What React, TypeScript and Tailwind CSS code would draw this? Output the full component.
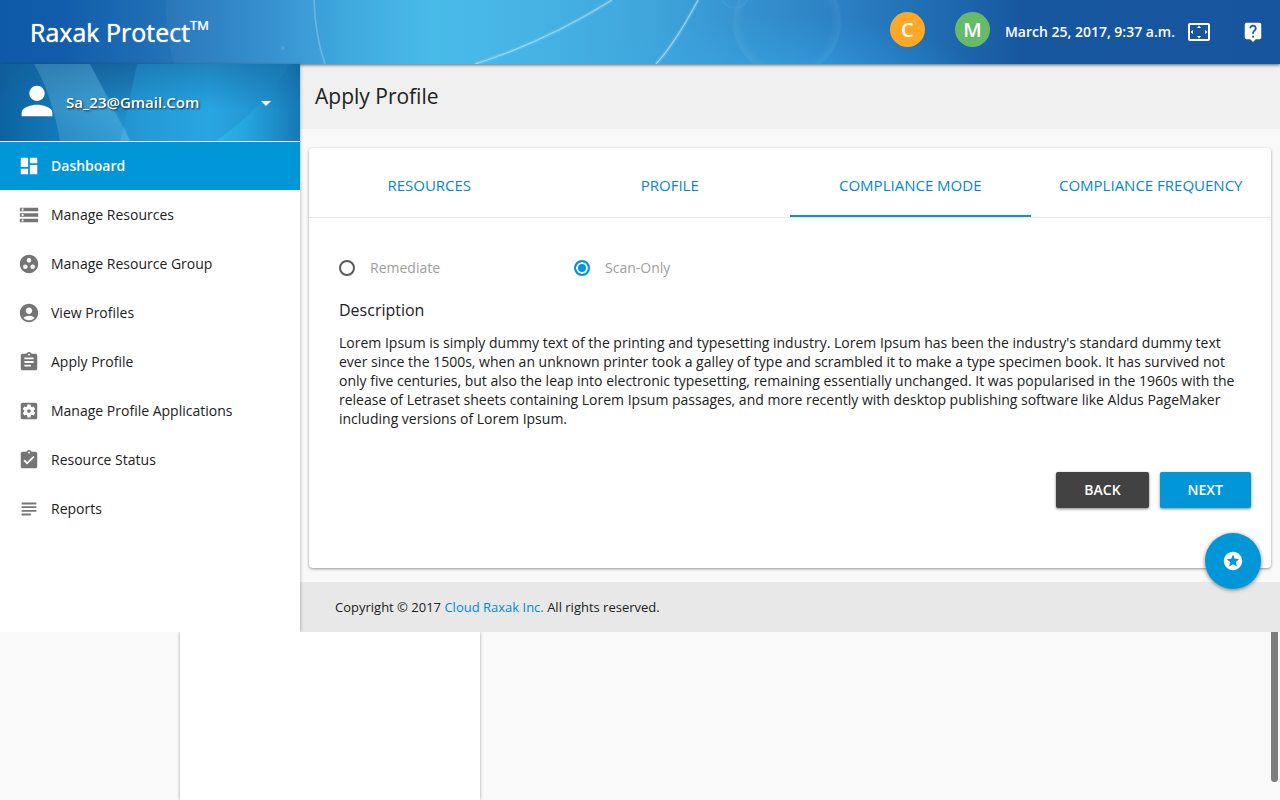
import { useState } from "react";
import type { IconType } from "react-icons";
import {
  MdAccountCircle,
  MdArrowDropDown,
  MdAssignment,
  MdAssignmentTurnedIn,
  MdDashboard,
  MdGroupWork,
  MdLiveHelp,
  MdPerson,
  MdSettingsApplications,
  MdSettingsOverscan,
  MdStars,
  MdStorage,
  MdSubject,
} from "react-icons/md";

const navItems: { label: string; icon: IconType }[] = [
  { label: "Dashboard", icon: MdDashboard },
  { label: "Manage Resources", icon: MdStorage },
  { label: "Manage Resource Group", icon: MdGroupWork },
  { label: "View Profiles", icon: MdAccountCircle },
  { label: "Apply Profile", icon: MdAssignment },
  { label: "Manage Profile Applications", icon: MdSettingsApplications },
  { label: "Resource Status", icon: MdAssignmentTurnedIn },
  { label: "Reports", icon: MdSubject },
];

const tabs = ["Resources", "Profile", "Compliance Mode", "Compliance Frequency"];
const modes = ["Remediate", "Scan-Only"];

function HeaderArt() {
  return (
    <svg className="absolute inset-0 h-full w-full" viewBox="0 0 1280 64" preserveAspectRatio="none" aria-hidden="true">
      <defs>
        <linearGradient id="sky" x1="0" x2="1" y1="0" y2="0">
          <stop offset="0" stopColor="#0f5aa8" />
          <stop offset="0.05" stopColor="#115dab" />
          <stop offset="0.13" stopColor="#2272b6" />
          <stop offset="0.2" stopColor="#2f8bcb" />
          <stop offset="0.27" stopColor="#3fa9de" />
          <stop offset="0.34" stopColor="#49bbe9" />
          <stop offset="0.42" stopColor="#45b3e4" />
          <stop offset="0.51" stopColor="#3fa5db" />
          <stop offset="0.58" stopColor="#3692cf" />
          <stop offset="0.66" stopColor="#2b7fc3" />
          <stop offset="0.72" stopColor="#216fb5" />
          <stop offset="0.8" stopColor="#1757a0" />
          <stop offset="1" stopColor="#17559f" />
        </linearGradient>
        <radialGradient id="glow">
          <stop offset="0" stopColor="#38b0ee" stopOpacity="0.55" />
          <stop offset="1" stopColor="#38b0ee" stopOpacity="0" />
        </radialGradient>
        <radialGradient id="bubble">
          <stop offset="0.8" stopColor="#7cc0e8" stopOpacity="0" />
          <stop offset="0.96" stopColor="#7cc0e8" stopOpacity="0.13" />
          <stop offset="1" stopColor="#7cc0e8" stopOpacity="0" />
        </radialGradient>
      </defs>
      <rect width="1280" height="64" fill="url(#sky)" />
      <path d="M166 0H320L325 64H174Q167 40 166 0Z" fill="#5fa6dc" fillOpacity="0.12" />
      <ellipse cx="780" cy="90" rx="210" ry="75" fill="url(#glow)" />
      <circle cx="787" cy="22" r="55" fill="url(#bubble)" />
      <circle cx="735" cy="-6" r="15" fill="url(#bubble)" />
      <g fill="none" stroke="#9ddcf6" strokeOpacity="0.2" strokeWidth="4">
        <path d="M475 64Q545 42 612 0" />
        <path d="M656 64Q676 42 698 0" />
      </g>
      <g fill="none" stroke="#b4e6fa" strokeOpacity="0.65">
        <path d="M475 64Q545 42 612 0" strokeWidth="1.3" />
        <path d="M656 64Q676 42 698 0" strokeWidth="1.3" />
        <path d="M314 0Q315 35 325 64" strokeOpacity="0.35" strokeWidth="1.6" />
      </g>
      <circle cx="283" cy="48" r="2" fill="#8fc9ee" fillOpacity="0.25" />
    </svg>
  );
}

function AccountArt() {
  return (
    <svg className="absolute inset-0 h-full w-full" viewBox="0 0 300 77" preserveAspectRatio="none" aria-hidden="true">
      <defs>
        <linearGradient id="pool" x1="0" x2="1" y1="0" y2="0">
          <stop offset="0" stopColor="#0d62a0" />
          <stop offset="0.2" stopColor="#147ab8" />
          <stop offset="0.42" stopColor="#2396d2" />
          <stop offset="0.7" stopColor="#28a6e2" />
          <stop offset="1" stopColor="#1c86c2" />
        </linearGradient>
        <linearGradient id="shade" x1="0" x2="0" y1="0" y2="1">
          <stop offset="0" stopColor="#125a91" stopOpacity="0.45" />
          <stop offset="0.6" stopColor="#125a91" stopOpacity="0" />
        </linearGradient>
        <linearGradient id="band" x1="0" x2="0" y1="0" y2="1">
          <stop offset="0" stopColor="#7cc4e0" stopOpacity="0.5" />
          <stop offset="1" stopColor="#5fb4e2" stopOpacity="0.3" />
        </linearGradient>
        <linearGradient id="fold" x1="0" x2="0" y1="0" y2="1">
          <stop offset="0" stopColor="#145c96" stopOpacity="0.6" />
          <stop offset="1" stopColor="#1f87c4" stopOpacity="0.4" />
        </linearGradient>
        <linearGradient id="edge" x1="0" x2="1" y1="0" y2="0">
          <stop offset="0" stopColor="#2bb6e9" />
          <stop offset="0.4" stopColor="#24a3dc" />
          <stop offset="1" stopColor="#1678b5" />
        </linearGradient>
      </defs>
      <rect width="300" height="77" fill="url(#pool)" />
      <path d="M34 0H90L130 77H60Q52 30 34 0Z" fill="url(#band)" />
      <path d="M90 0H137L124 62Z" fill="url(#fold)" />
      <path d="M124 62L130 77H120Z" fill="#67bde8" fillOpacity="0.3" />
      <path d="M290 0Q262 45 216 77H300V0Z" fill="url(#edge)" />
      <rect width="300" height="77" fill="url(#shade)" />
    </svg>
  );
}

export default function App() {
  const [tab, setTab] = useState("Compliance Mode");
  const [mode, setMode] = useState("Scan-Only");

  return (
    <div className="flex min-h-screen flex-col bg-[#f9f9f9] font-['Open_Sans','Noto_Sans',sans-serif] text-sm text-[#212121]">
      <header className="relative z-10 flex h-16 shrink-0 items-center bg-[#17559f] pr-4 pl-[30px] text-white shadow-[0_1px_3px_rgba(0,0,0,0.6)]">
        <HeaderArt />
        <h1 className="relative flex-1 pb-px text-[25px] leading-8 [text-shadow:0_0_1px_#fff]">
          Raxak Protect<sup className="-top-[12px] text-[13px] leading-none">TM</sup>
        </h1>
        <div className="relative flex items-center">
          <button className="mr-[30px] mb-[5px] size-[35px] rounded-full bg-[#ffa726] text-xl leading-[34px] font-semibold" aria-label="Critical">C</button>
          <button className="mr-[15px] mb-[5px] size-[35px] rounded-full bg-[#66bb6a] text-xl leading-[34px] font-semibold" aria-label="Moderate">M</button>
          <time className="font-semibold" dateTime="2017-03-25T09:37">March 25, 2017, 9:37 a.m.</time>
          <button className="ml-3" aria-label="Full screen"><MdSettingsOverscan size={24} /></button>
          <button className="ml-[31px]" aria-label="Help"><MdLiveHelp size={22} /></button>
        </div>
      </header>

      <div className="flex">
        <aside className="relative z-20 w-[300px] shrink-0 bg-white shadow-[1px_0_3px_rgba(0,0,0,0.2)]">
          <button className="relative flex h-[77px] w-full items-center pr-[22px] pl-[14px] text-white">
            <AccountArt />
            <MdPerson size={46} className="relative mb-1" />
            <span className="relative ml-[6px] flex-1 text-left text-[15px] font-semibold [text-shadow:1px_1px_2px_rgba(0,0,0,0.7)]">Sa_23@Gmail.Com</span>
            <MdArrowDropDown size={24} className="relative" />
          </button>
          <nav className="mt-px">
            <ul className="flex flex-col gap-px">
              {navItems.map(({ label, icon: Icon }, i) => (
                <li key={label}>
                  <a
                    href="#"
                    className={
                      i === 0
                        ? "flex h-12 items-center gap-[11px] bg-[#0096d8] pl-[18px] font-semibold text-white"
                        : "flex h-12 items-center gap-[11px] pl-[18px]"
                    }
                  >
                    <Icon size={22} className={i === 0 ? "text-white" : "text-[#757575]"} />
                    {label}
                  </a>
                </li>
              ))}
            </ul>
          </nav>
        </aside>

        <div className="flex min-w-0 flex-1 flex-col">
          <h2 className="h-[65px] bg-[#f0f0f0] pl-[15px] text-[21px] leading-[64px]">Apply Profile</h2>

          <main className="relative mx-[9px] mt-[19px] mb-[14px] rounded-sm bg-white shadow-[0_1px_3px_rgba(0,0,0,0.4)]">
            <div role="tablist" className="flex h-[70px] border-b border-[#e8e8e8]">
              {tabs.map((name) => (
                <button
                  key={name}
                  role="tab"
                  aria-selected={tab === name}
                  onClick={() => setTab(name)}
                  className={
                    tab === name
                      ? "flex-1 basis-0 border-b-2 border-[#0099d0] pt-2 text-[15px] text-[#0288d1] uppercase"
                      : "flex-1 basis-0 border-b-2 border-transparent pt-2 text-[15px] text-[#0288d1] uppercase"
                  }
                >
                  {name}
                </button>
              ))}
            </div>

            <div className="px-[30px] pt-10">
              <div className="flex" role="radiogroup" aria-label="Compliance mode">
                {modes.map((name) => (
                  <label key={name} className="flex h-5 w-[235px] items-center gap-[15px] text-[#9e9e9e]">
                    <input
                      type="radio"
                      name="mode"
                      checked={mode === name}
                      onChange={() => setMode(name)}
                      className="size-4 appearance-none rounded-full border-2 border-[#5a5a5a] checked:border-[#0096d8] checked:bg-[#0096d8] checked:shadow-[inset_0_0_0_2px_#fff]"
                    />
                    {name}
                  </label>
                ))}
              </div>
              <h3 className="mt-[22px] text-base leading-5">Description</h3>
              <p className="mt-[13px] leading-[19px]">
                Lorem Ipsum is simply dummy text of the printing and typesetting industry. Lorem Ipsum has been the industry's
                standard dummy text ever since the 1500s, when an unknown printer took a galley of type and scrambled it to make a
                type specimen book. It has survived not only five centuries, but also the leap into electronic typesetting,
                remaining essentially unchanged. It was popularised in the 1960s with the release of Letraset sheets containing
                Lorem Ipsum passages, and more recently with desktop publishing software like Aldus PageMaker including versions of
                Lorem Ipsum.
              </p>
            </div>

            <div className="flex justify-end gap-[11px] px-5 pt-11 pb-[60px]">
              <button className="h-9 rounded-xs bg-[#424242] px-7 font-semibold text-white uppercase shadow-[0_1px_3px_rgba(0,0,0,0.5)]">Back</button>
              <button className="h-9 rounded-xs bg-[#0096d8] px-7 font-semibold text-white uppercase shadow-[0_1px_3px_rgba(0,0,0,0.5)]">Next</button>
            </div>

            <button
              aria-label="Favourites"
              className="absolute right-[10px] -bottom-[21px] flex size-14 items-center justify-center rounded-full bg-[#0096d8] text-white shadow-[0_1px_4px_rgba(0,0,0,0.5)]"
            >
              <MdStars size={22} />
            </button>
          </main>

          <footer className="h-[50px] bg-[#e8e8e8] pl-[35px] text-[13px] leading-[50px]">
            Copyright © 2017 <a href="#" className="text-[#0288d1]">Cloud Raxak Inc.</a> All rights reserved.
          </footer>
        </div>
      </div>

      <div className="relative z-30 flex flex-1 justify-between overflow-hidden bg-[#f9f9f9] pr-[2px] pl-[180px]">
        <div className="w-[300px] bg-white shadow-[0_0_3px_rgba(0,0,0,0.35)]" />
        <div className="mb-[18px] w-[7px] rounded-b-full bg-[#7d7d7d]" />
      </div>
    </div>
  );
}
